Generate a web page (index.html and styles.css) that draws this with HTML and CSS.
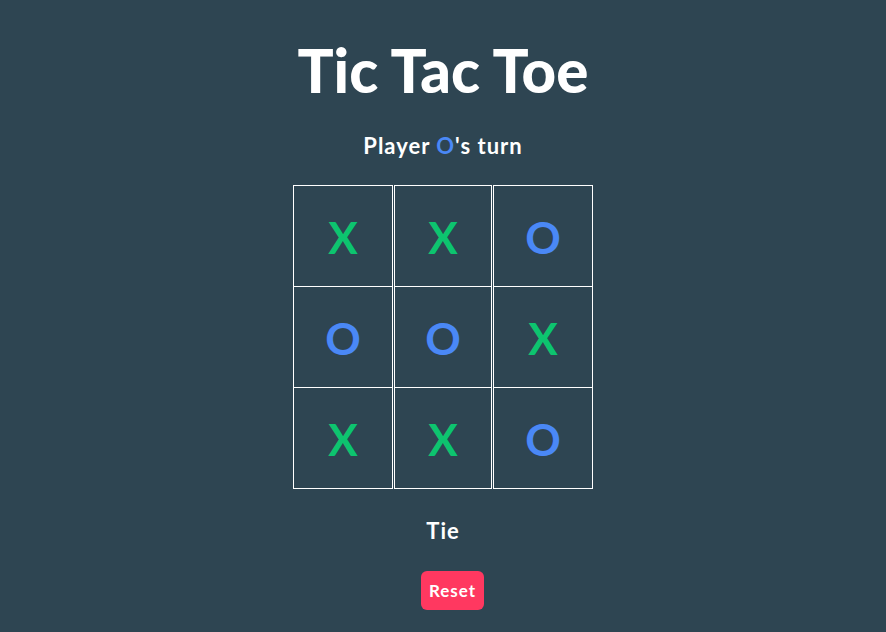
FILE: index.html
```html
<!DOCTYPE html>
<html lang="en">
<head>
<meta charset="utf-8">
<title>Tic Tac Toe</title>
<link rel="stylesheet" href="styles.css">
</head>
<body>
<main class="game">
  <h1 class="title">Tic Tac Toe</h1>
  <p class="status">Player <span class="o">O</span>'s turn</p>
  <div class="board">
    <div class="cell x">X</div>
    <div class="cell x">X</div>
    <div class="cell o">O</div>
    <div class="cell o">O</div>
    <div class="cell o">O</div>
    <div class="cell x">X</div>
    <div class="cell x">X</div>
    <div class="cell x">X</div>
    <div class="cell o">O</div>
  </div>
  <p class="result">Tie</p>
  <button class="reset">Reset</button>
</main>
</body>
</html>
```
FILE: styles.css
```css
html, body {
  margin: 0;
  padding: 0;
  background: #2e4552;
  height: 100%;
}
body {
  font-family: Lato, "Noto Sans", sans-serif;
  color: #ffffff;
}
.game {
  display: flex;
  flex-direction: column;
  align-items: center;
  padding-top: 34px;
}
.title {
  margin: 0;
  font-size: 60px;
  line-height: 72px;
  font-weight: 900;
}
.status {
  margin: 27px 0 0;
  font-size: 22px;
  line-height: 26px;
  font-weight: 700;
  letter-spacing: 1px;
}
.o { color: #4a88f6; }
.x { color: #0dc46f; }
.board {
  margin-top: 26px;
  display: grid;
  grid-template-columns: 100px 98px 100px;
  grid-template-rows: 101px 101px 102px;
  column-gap: 1px;
  width: 300px;
  letter-spacing: 0;
}
.cell {
  box-sizing: border-box;
  border: 1px solid #ffffff;
  border-bottom: none;
  display: flex;
  align-items: center;
  justify-content: center;
  font-size: 44px;
  font-weight: 700;
  padding-top: 2px;
}
.cell:nth-child(n+7) {
  border-bottom: 1px solid #ffffff;
  padding-top: 1px;
}
.result {
  margin: 29px 0 0;
  font-size: 22px;
  line-height: 26px;
  font-weight: 700;
  letter-spacing: 1px;
}
.reset {
  margin-top: 27px;
  margin-left: 19px;
  width: 63px;
  height: 39px;
  border: none;
  border-radius: 6px;
  background: #ff3860;
  color: #ffffff;
  font-family: Lato, "Noto Sans", sans-serif;
  font-size: 17px;
  font-weight: 700;
  letter-spacing: 1px;
  padding: 0;
}
```
